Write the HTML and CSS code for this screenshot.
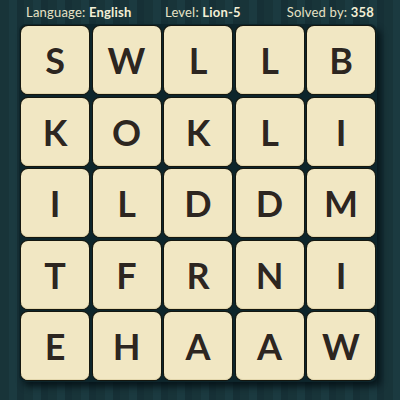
FILE: index.html
```html
<!DOCTYPE html>
<html>
<head>
<meta charset="utf-8">
<link rel="stylesheet" href="styles.css">
</head>
<body>
<div class="page">
  <div class="header">
    <span class="info info-left">Language: <b>English</b></span>
    <span class="info">Level: <b>Lion-5</b></span>
    <span class="info info-right">Solved by: <b>358</b></span>
  </div>
  <div class="board">
    <div class="tile">S</div><div class="tile">W</div><div class="tile">L</div><div class="tile">L</div><div class="tile">B</div>
    <div class="tile">K</div><div class="tile">O</div><div class="tile">K</div><div class="tile">L</div><div class="tile">I</div>
    <div class="tile">I</div><div class="tile">L</div><div class="tile">D</div><div class="tile">D</div><div class="tile">M</div>
    <div class="tile">T</div><div class="tile">F</div><div class="tile">R</div><div class="tile">N</div><div class="tile">I</div>
    <div class="tile">E</div><div class="tile">H</div><div class="tile">A</div><div class="tile">A</div><div class="tile">W</div>
  </div>
</div>
</body>
</html>
```
FILE: styles.css
```css
html, body {
  margin: 0;
  padding: 0;
}
body {
  width: 400px;
  height: 400px;
  overflow: hidden;
  background-color: #173238;
  background-image: repeating-linear-gradient(90deg,
    #183439 0px, #183439 9px,
    #1b3a40 9px, #1b3a40 17px,
    #163036 17px, #163036 24px);
  font-family: "Lato", "Open Sans", sans-serif;
}
.page {
  display: flex;
  flex-direction: column;
}
.header {
  height: 24px;
  display: flex;
  align-items: center;
  padding: 0 26px 0 26px;
  color: #e6e2c6;
  font-size: 13px;
  letter-spacing: 0.2px;
}
.info-left {
  width: 139px;
}
.info-right {
  margin-left: auto;
}
.info b {
  font-weight: 700;
  color: #f3efd6;
}
.board {
  margin-left: 19px;
  width: 354px;
  padding: 2px;
  display: grid;
  grid-template-columns: repeat(5, 68px);
  grid-auto-rows: 68px;
  gap: 3.5px;
  background: #0d252b;
  border-radius: 7px;
  box-shadow: 4px 5px 6px rgba(5, 18, 22, 0.85);
}
.tile {
  background: #f1e7c3;
  border-radius: 7px;
  box-shadow: 0 0 0 1px #15170f, inset 0 -1px 0 #e2d6ac;
  display: flex;
  align-items: center;
  justify-content: center;
  font-size: 36px;
  font-weight: 700;
  color: #2d2620;
  text-shadow: 0 0 1px #fffbe8;
}
```
